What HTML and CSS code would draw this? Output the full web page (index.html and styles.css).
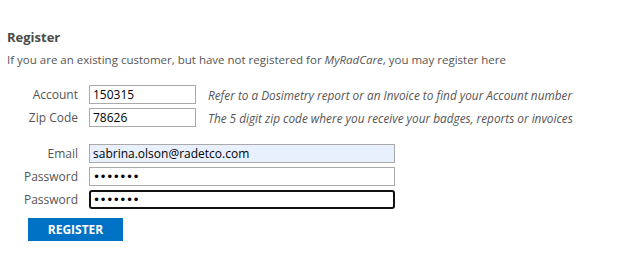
FILE: index.html
```html
<!DOCTYPE html>
<html>

<head>
    <link rel="stylesheet" href="styles.css">
</head>

<body>
    <div class="register">
        <p class="title">Register</p>
        <p class="intro">If you are an existing customer, but have not registered for <i>MyRadCare</i>, you may register here</p>

        <div class="group">
            <div class="row">
                <label class="label">Account</label>
                <input type="text" class="field short" value="150315">
                <span class="hint">Refer to a Dosimetry report or an Invoice to find your Account number</span>
            </div>
            <div class="row">
                <label class="label">Zip Code</label>
                <input type="text" class="field short" value="78626">
                <span class="hint">The 5 digit zip code where you receive your badges, reports or invoices</span>
            </div>
        </div>

        <div class="group">
            <div class="row">
                <label class="label">Email</label>
                <input type="text" class="field long filled" value="sabrina.olson@radetco.com">
            </div>
            <div class="row">
                <label class="label">Password</label>
                <input type="password" class="field long secret" value="sabrina">
            </div>
            <div class="row">
                <label class="label">Password</label>
                <input type="password" class="field long secret active" value="sabrina">
            </div>
        </div>

        <button class="btn">REGISTER</button>
    </div>
</body>

</html>
```

FILE: styles.css
```css
body {
    margin: 0;
    background: white;
    font-family: "Open Sans", "Noto Sans", sans-serif;
    color: #555;
}

.register {
    padding: 28px 0 0 7px;
}

.title {
    margin: 0;
    font-size: 13px;
    font-weight: bold;
    line-height: 18px;
    color: #4a4a4a;
}

.intro {
    margin: 5px 0 0 0;
    font-size: 11.5px;
    line-height: 17px;
}

.group {
    margin-top: 17px;
    display: flex;
    flex-direction: column;
    gap: 4px;
}

.group + .group {
    margin-top: 17px;
}

.row {
    display: flex;
    align-items: center;
    height: 19px;
}

.label {
    width: 71px;
    margin-right: 11px;
    text-align: right;
    font-size: 12px;
}

.field {
    box-sizing: border-box;
    height: 19px;
    margin: 0;
    padding: 0 3px;
    border: 1px solid #aaa;
    border-radius: 0;
    font-family: "Open Sans", "Noto Sans", sans-serif;
    font-size: 12px;
    color: black;
    outline: none;
}

.short {
    width: 107px;
}

.long {
    width: 306px;
}

.filled {
    background-color: #e8f0fe;
}

.secret {
    font-family: "DejaVu Sans", sans-serif;
    font-size: 12px;
    letter-spacing: -0.5px;
}

.active {
    border: 2px solid #111;
    border-radius: 3px;
    padding: 0 2px;
}

.hint {
    margin-left: 12px;
    font-size: 11.8px;
    font-style: italic;
}

.btn {
    margin: 9px 0 0 21px;
    width: 95px;
    height: 23px;
    border: none;
    background-color: #0072c6;
    color: white;
    font-family: "Open Sans", "Noto Sans", sans-serif;
    font-size: 12px;
    font-weight: bold;
}
```
